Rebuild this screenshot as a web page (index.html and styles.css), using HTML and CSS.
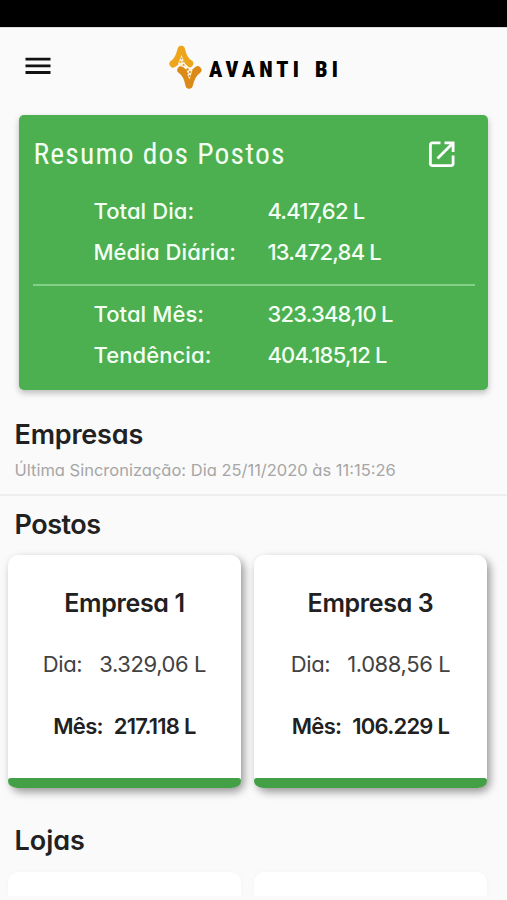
FILE: index.html
```
<!DOCTYPE html>
<html lang="pt-BR">
<head>
  <meta charset="UTF-8">
  <meta name="viewport" content="width=device-width, initial-scale=1.0">
  <title>Avanti BI</title>
  <link rel="stylesheet" href="styles.css">
</head>
<body>
  <div class="status-bar"></div>

  <header class="topbar">
    <button class="btn-menu" aria-label="Menu">
      <svg width="26" height="18" viewBox="0 0 26 18"><path d="M0.5 0.7h25v2.8h-25zM0.5 7.4h25v2.8h-25zM0.5 14.1h25v2.8h-25z" fill="#111"/></svg>
    </button>
    <div class="logo">
      <svg width="34" height="46" viewBox="0 0 34 46">
        <path d="M5.200 18.800Q10.500 16 13.300 4.500Q15.500 15 21.500 18.500" fill="none" stroke="#eda51c" stroke-width="7.500" stroke-linecap="round" stroke-linejoin="round"/>
        <path d="M13 25Q19 29 21.200 40Q23.500 29 29.700 25" fill="none" stroke="#dc8a17" stroke-width="7.500" stroke-linecap="round" stroke-linejoin="round"/>
        <path d="M13.500 10L10 19L13 21.500L16.500 21.500L19 25L19 29L21.500 34.500L24.500 25L20.500 22L17 18.500z" fill="#fdf3e0"/>
        <g fill="#eda51c">
          <circle cx="13.500" cy="13.500" r="1"/><circle cx="12.500" cy="17" r="1.100"/><circle cx="15.500" cy="16.500" r="1"/><circle cx="15.500" cy="20" r="1.100"/>
        </g>
        <g fill="#dc8a17">
          <circle cx="19.500" cy="24.500" r="1.200"/><circle cx="22" cy="27" r="1.100"/><circle cx="19.500" cy="28.500" r="1"/><circle cx="21.500" cy="31" r="1"/>
        </g>
      </svg>
      <span class="logo-text">AVANTI BI</span>
    </div>
  </header>

  <section class="resumo">
    <div class="resumo-header">
      <h1>Resumo dos Postos</h1>
      <svg width="28" height="28" viewBox="0 0 28 28" fill="none" stroke="#fff" stroke-width="2.800">
        <path d="M12.500 2.900H4.200a1.800 1.800 0 0 0-1.800 1.800v19.100a1.800 1.800 0 0 0 1.800 1.800h19.100a1.800 1.800 0 0 0 1.800-1.800V15.500"/>
        <path d="M16.500 2.900h8.600v9M24.500 3.500L9.500 18.500"/>
      </svg>
    </div>
    <div class="resumo-grid">
      <span>Total Dia:</span><span class="valor">4.417,62 L</span>
      <span>Média Diária:</span><span class="valor">13.472,84 L</span>
    </div>
    <hr>
    <div class="resumo-grid">
      <span>Total Mês:</span><span class="valor">323.348,10 L</span>
      <span>Tendência:</span><span class="valor">404.185,12 L</span>
    </div>
  </section>

  <section class="empresas">
    <h2>Empresas</h2>
    <p>Última Sincronização: Dia 25/11/2020 às 11:15:26</p>
  </section>

  <section class="grupo">
    <h2>Postos</h2>
    <div class="cards">
      <div class="card">
        <h3>Empresa 1</h3>
        <p class="dia"><span>Dia:</span><span>3.329,06 L</span></p>
        <p class="mes"><span>Mês:</span><span>217.118 L</span></p>
      </div>
      <div class="card">
        <h3>Empresa 3</h3>
        <p class="dia"><span>Dia:</span><span>1.088,56 L</span></p>
        <p class="mes"><span>Mês:</span><span>106.229 L</span></p>
      </div>
    </div>
  </section>

  <section class="grupo lojas">
    <h2>Lojas</h2>
    <div class="cards">
      <div class="card-top"></div>
      <div class="card-top"></div>
    </div>
  </section>
</body>
</html>
```
FILE: styles.css
```
* {
  box-sizing: border-box;
}
body {
  font-family: Inter, Lato, sans-serif;
  font-feature-settings: "cv11";
  background: #fafafa;
  color: #212121;
  margin: 0;
}
h1, h2, h3, p {
  margin: 0;
}
/* Topo */
.status-bar {
  height: 27px;
  background: #000;
}
.topbar {
  display: flex;
  align-items: flex-start;
  height: 88px;
  padding: 17px 0 0 25px;
  border-top: 1px solid #ddd;
}
.btn-menu {
  display: flex;
  padding: 0;
  margin-top: 12px;
  border: none;
  background: none;
}
.logo {
  display: flex;
  margin-left: 117px;
}
.logo-text {
  margin: 13px 0 0 7px;
  font-family: Roboto, sans-serif;
  font-size: 22px;
  font-weight: 900;
  font-stretch: 80%;
  line-height: 24px;
  letter-spacing: 4.1px;
  word-spacing: 3px;
  color: #000;
  white-space: nowrap;
}
/* Resumo */
.resumo {
  width: 469px;
  height: 275px;
  margin-left: 19.4px;
  padding: 0 13px 0 14px;
  background: #4caf50;
  color: #f4fff4;
  border-radius: 5px;
  box-shadow: 0 3px 6px rgba(0,0,0,0.25);
}
.resumo-header {
  display: flex;
  justify-content: space-between;
  align-items: center;
  height: 76px;
  padding: 2px 19px 0 0;
}
.resumo h1 {
  font-family: Roboto, sans-serif;
  font-size: 29.5px;
  font-weight: 400;
  font-stretch: 75%;
  letter-spacing: 1.2px;
  white-space: nowrap;
}
.resumo-grid {
  display: grid;
  grid-template-columns: 174px 1fr;
  grid-auto-rows: 40.5px;
  align-items: center;
  padding-left: 60px;
  font-size: 22px;
  font-weight: 450;
  letter-spacing: 0.1px;
  white-space: nowrap;
}
.valor {
  letter-spacing: -0.8px;
}
.resumo hr {
  height: 2px;
  margin: 12px 0 8px;
  border: none;
  background: #85d088;
}
/* Seções */
h2 {
  font-size: 27px;
  font-weight: 600;
  line-height: 32px;
  letter-spacing: -0.2px;
}
.empresas {
  height: 106px;
  padding: 29px 14.5px 0;
  border-bottom: 2px solid #eee;
}
.empresas p {
  margin-top: 7px;
  font-size: 16.5px;
  line-height: 24px;
  color: #a6a6a6;
  white-space: nowrap;
}
.grupo {
  padding: 13px 8px 0;
}
.grupo h2 {
  padding-left: 6.5px;
  letter-spacing: -0.5px;
}
.cards {
  display: grid;
  grid-template-columns: 233px 233px;
  gap: 13px;
  margin-top: 14px;
}
.card {
  display: flex;
  flex-direction: column;
  height: 233px;
  padding-top: 30px;
  background: #fff;
  border-radius: 10px;
  box-shadow: 3px 4px 8px rgba(0,0,0,0.4);
  text-align: center;
  white-space: nowrap;
}
/* Barra verde no rodapé do card */
.card::after {
  content: "";
  height: 10px;
  margin-top: auto;
  background: #43a047;
  border-radius: 3px 3px 10px 10px / 3px 3px 8px 8px;
}
.card h3 {
  font-size: 25px;
  font-weight: 600;
  line-height: 36px;
  letter-spacing: -0.35px;
}
.card p {
  display: flex;
  justify-content: center;
  font-size: 22px;
  line-height: 30px;
}
.card .dia {
  gap: 17px;
  margin-top: 28px;
  color: #424242;
  letter-spacing: -0.4px;
}
.card .mes {
  gap: 11px;
  margin-top: 32px;
  font-weight: 600;
  letter-spacing: -0.75px;
}
.lojas {
  padding-top: 37px;
}
.lojas h2 {
  letter-spacing: 0;
}
.lojas .cards {
  margin-top: 15px;
}
.card-top {
  height: 24px;
  background: #fff;
  border-radius: 10px 10px 0 0;
  box-shadow: 0 0 4px rgba(0,0,0,0.03);
}
```
